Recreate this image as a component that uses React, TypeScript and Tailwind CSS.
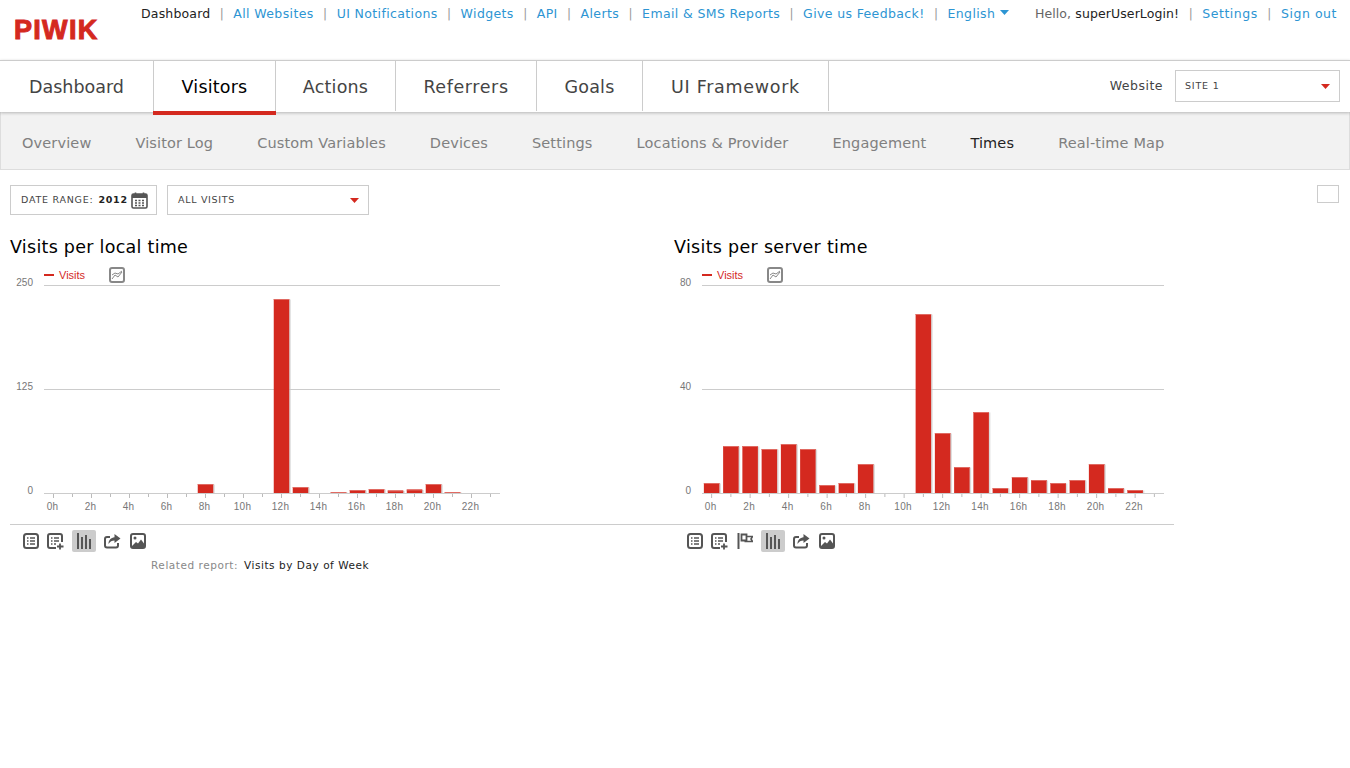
import React from 'react';

const FONT = 'font-["DejaVu_Sans",Verdana,sans-serif]';

const RED = '#d4291f';

const topLinks = ['All Websites', 'UI Notifications', 'Widgets', 'API', 'Alerts', 'Email & SMS Reports', 'Give us Feedback!'];
const mainTabs = [
  { label: 'Dashboard', w: 'w-[153px]', track: 'tracking-[0px]' },
  { label: 'Visitors', w: 'w-[123px]', track: 'tracking-[0.2px]', active: true },
  { label: 'Actions', w: 'w-[120px]', track: 'tracking-[0.2px]' },
  { label: 'Referrers', w: 'w-[141px]', track: 'tracking-[0.6px]' },
  { label: 'Goals', w: 'w-[106px]', track: 'tracking-[0.2px]' },
  { label: 'UI Framework', w: 'w-[186px]', track: 'tracking-[0.7px]' },
];
const subTabs = ['Overview', 'Visitor Log', 'Custom Variables', 'Devices', 'Settings', 'Locations & Provider', 'Engagement', 'Times', 'Real-time Map'];

const Sep = () => <span className="w-[23px] text-center text-[12px] tracking-normal text-[#999]">|</span>;

const IconList = () => (
  <svg width="16" height="16" viewBox="0 0 16 16" fill="none" stroke="#555">
    <rect x="1" y="1" width="14" height="14" rx="2.5" strokeWidth="2" />
    <path d="M4 5h1.5M7 5h5M4 8h1.5M7 8h5M4 11h1.5M7 11h5" strokeWidth="1.6" />
  </svg>
);

const IconListPlus = () => (
  <svg width="17" height="17" viewBox="0 0 17 17" fill="none" stroke="#555">
    <path d="M9 15H3a2 2 0 0 1-2-2V3a2 2 0 0 1 2-2h10a2 2 0 0 1 2 2v6" strokeWidth="2" />
    <path d="M4 5h1.5M7 5h5M4 8h1.5M7 8h5M4 11h1.5M7 11h2" strokeWidth="1.6" />
    <path d="M13 10.5v6M10 13.5h6.5" strokeWidth="1.8" />
  </svg>
);

const IconFlag = () => (
  <svg width="16" height="16" viewBox="0 0 16 16" fill="none" stroke="#555">
    <path d="M1.5 0v16" strokeWidth="2" />
    <path d="M4.5 1.5h5v6h-5z" strokeWidth="1.8" />
    <path d="M9.5 3.5h6l-1.5 2.5 1.5 2.5H7.5" strokeWidth="1.6" />
  </svg>
);

const IconBars = () => (
  <svg width="16" height="16" viewBox="0 0 16 16" fill="#555">
    <rect x="1" y="0" width="2" height="16" />
    <rect x="5" y="4" width="2" height="12" />
    <rect x="9" y="2" width="2" height="14" />
    <rect x="13" y="6" width="2" height="10" />
  </svg>
);

const IconShare = () => (
  <svg width="17" height="16" viewBox="0 0 17 16" fill="none">
    <path d="M6 4H3a2 2 0 0 0-2 2v6.5a2 2 0 0 0 2 2h9a2 2 0 0 0 2-2V10" stroke="#555" strokeWidth="2" />
    <path d="M10.5 1l6 4.5-6 4.5V7.5C8 7.5 6 8.5 4.5 11c0-4 2.5-6.5 6-6.8z" fill="#555" />
  </svg>
);

const IconImage = () => (
  <svg width="16" height="16" viewBox="0 0 16 16" fill="none">
    <rect x="1" y="1" width="14" height="14" rx="2" stroke="#555" strokeWidth="2" />
    <circle cx="5" cy="5" r="1.5" fill="#555" />
    <path d="M2 13l4-4 2 1.5 3-4 3 4V14H2z" fill="#555" />
  </svg>
);

const IconCalendar = () => (
  <svg width="17" height="17" viewBox="0 0 17 17" fill="none" className="ml-[3px]">
    <rect x="1" y="2" width="15" height="14" rx="1.5" stroke="#555" strokeWidth="1.6" />
    <rect x="1" y="2" width="15" height="4" fill="#555" />
    <path d="M4.5 0.5v3M12.5 0.5v3" stroke="#555" strokeWidth="1.6" />
    <path d="M4 8.5h2M7.5 8.5h2M11 8.5h2M4 11h2M7.5 11h2M11 11h2M4 13.5h2M7.5 13.5h2M11 13.5h2" stroke="#555" strokeWidth="1.4" />
  </svg>
);

const Caret = ({ color = RED }: { color?: string }) => (
  <svg width="9" height="5" viewBox="0 0 9 5" fill={color}>
    <path d="M0 0h9L4.5 5z" />
  </svg>
);

type ChartProps = {
  tops: Record<number, number>;
  yLabels: string[];
  x0: number;
  plotW: number;
};

// tops are page y values, the svg starts at y=262 of the page
const BarChart = ({ tops, yLabels, x0, plotW }: ChartProps) => {
  const step = plotW / 24;
  const axis = 231;
  const barW = 15.5;
  const ticks = Array.from({ length: 24 }, (_, i) => i);
  return (
    <svg width="500" height="262" viewBox="0 0 500 262" className="block">
      <rect x={x0} y="12" width="10" height="2" fill={RED} />
      <text x={x0 + 15} y="17" fontSize="11" fill={RED} fontFamily="'Liberation Sans', sans-serif">Visits</text>
      <g fill="none" stroke="#888" transform={`translate(${x0 + 65} 0)`}>
        <rect x="1" y="6" width="14" height="14" rx="2" strokeWidth="2" />
        <path d="M3 17l3-4 3 2 4-5M3 13l3-2 3 1 4-3" strokeWidth="1" />
      </g>
      <path d={`M${x0} 23.5H${x0 + plotW}M${x0} 127.5H${x0 + plotW}M${x0} 231.5H${x0 + plotW}`} stroke="#ccc" />
      {yLabels.map((l, i) => (
        <text key={l} x={x0 - 11} y={24 + i * 104} fontSize="10" fill="#777" textAnchor="end" fontFamily="'Liberation Sans', sans-serif">{l}</text>
      ))}
      {Object.entries(tops).map(([hour, top]) => {
        const x = x0 + Number(hour) * step + (step - barW) / 2;
        const y = top - 262;
        return (
          <g key={hour}>
            <rect x={x + 1.5} y={y + 0.5} width={barW} height={axis - y} fill="#ccc" opacity="0.7" />
            <rect x={x} y={y} width={barW} height={axis - y} fill={RED} />
            <rect x={x} y={y} width={barW} height="1" fill="#e06a62" />
          </g>
        );
      })}
      {ticks.map((i) => (
        <path key={i} d={`M${x0 + (i + 0.5) * step} 232v${i % 2 === 0 ? 4 : 3}`} stroke="#bbb" />
      ))}
      {ticks.filter((i) => i % 2 === 0).map((i) => (
        <text key={i} x={x0 + (i + 0.5) * step - 1} y="248" fontSize="10" fill="#777" textAnchor="middle" fontFamily="'Liberation Sans', sans-serif" letterSpacing="0.3">{i}h</text>
      ))}
    </svg>
  );
};

const IconBtn = ({ children, active }: { children: React.ReactNode; active?: boolean }) => (
  <span className={`flex h-[22px] items-center justify-center rounded-[2px] ${active ? 'w-[24px] bg-[#ccc]' : 'w-[17px]'}`}>{children}</span>
);

const localTops: Record<number, number> = { 8: 484, 12: 299, 13: 487, 15: 492, 16: 490, 17: 489, 18: 490.5, 19: 489.5, 20: 484, 21: 492 };
const serverTops: Record<number, number> = { 0: 483, 1: 446, 2: 446, 3: 449, 4: 444, 5: 449, 6: 485, 7: 483, 8: 464, 11: 314, 12: 433, 13: 467, 14: 412, 15: 488, 16: 477, 17: 480, 18: 483, 19: 480, 20: 464, 21: 488, 22: 490 };

export default function App() {
  return (
    <div className={`${FONT} relative min-h-[768px] bg-white text-[#444]`}>
      <header className="flex h-[60px]">
        <div className="w-[141px] pt-[14px] pl-[14px]">
          <span className="block font-['Liberation_Sans',sans-serif] text-[27px] leading-[32px] font-bold tracking-[1.3px] text-[#d4291f] [-webkit-text-stroke:1px_#d4291f]">PIWIK</span>
        </div>
        <nav className="flex items-start pt-[6px] text-[12.5px] leading-[16px] tracking-[0.37px] text-[#2d95d3]">
          <span className="tracking-[0.17px] text-[#222]">Dashboard</span>
          {topLinks.map((l) => (
            <React.Fragment key={l}>
              <Sep />
              <span>{l}</span>
            </React.Fragment>
          ))}
          <Sep />
          <span className="flex items-start gap-[5px]">English<span className="pt-[4px]"><Caret color="#2d95d3" /></span></span>
        </nav>
        <div className="ml-auto flex items-start pt-[6px] pr-[13px] text-[12.5px] leading-[16px] tracking-[0.55px] text-[#2d95d3]">
          <span className="tracking-[0.1px] text-[#666]">Hello, <span className="text-[#222]">superUserLogin!</span></span>
          <Sep />
          <span>Settings</span>
          <Sep />
          <span>Sign out</span>
        </div>
      </header>

      <div className="relative z-10 flex h-[52px] border-t border-[#ccc] shadow-[0_1px_3px_rgba(0,0,0,0.25)]">
        {mainTabs.map((t) => (
          <div
            key={t.label}
            className={`${t.w} ${t.track} relative flex h-[50px] shrink-0 items-center justify-center border-r border-[#ccc] pt-[3px] text-[17.5px] ${t.active ? 'border-l text-black' : 'text-[#444]'} ${t.label === 'Dashboard' ? 'border-r-0' : ''}`}
          >
            {t.label}
            {t.active && <span className="absolute -bottom-[4px] -left-px h-[4px] w-[123px] bg-[#d4291f]" />}
          </div>
        ))}
        <div className="ml-auto flex items-center pr-[10px] pb-px">
          <span className="mr-[12px] text-[12.5px] tracking-[0.5px] text-[#444]">Website</span>
          <div className="flex h-[32px] w-[165px] items-center justify-between border border-[#ccc] pr-[9px] pl-[9px] text-[9.5px] tracking-[0.8px]">
            SITE 1
            <Caret />
          </div>
        </div>
      </div>

      <div className="flex h-[58px] items-center gap-[44px] border border-t-0 border-[#ddd] bg-[#f2f2f2] pt-[6px] pl-[21px] text-[14.5px] tracking-[0.14px] text-[#808080]">
        {subTabs.map((s) => (
          <span key={s} className={s === 'Times' ? 'text-[#222]' : ''}>{s}</span>
        ))}
      </div>

      <div className="flex items-start px-[10px] pt-[15px]">
        <div className="flex h-[30px] w-[147px] items-center border border-[#ccc] pl-[10px] text-[9.5px] tracking-[0.75px]">
          DATE RANGE:<b className="ml-[5px] text-[#222]">2012</b><IconCalendar />
        </div>
        <div className="ml-[10px] flex h-[30px] w-[202px] items-center justify-between border border-[#ccc] pr-[9px] pl-[10px] text-[9.5px] tracking-[0.7px]">
          ALL VISITS
          <Caret />
        </div>
        <div className="mr-[1px] ml-auto h-[18px] w-[22px] border border-[#ccc]" />
      </div>

      <div className="grid grid-cols-[664px_500px] px-[10px]">
        <section>
          <h2 className="mt-[19px] h-[26px] text-[17.5px] leading-[26px] tracking-[0.27px] text-black">Visits per local time</h2>
          <div className="mt-[2px]">
            <BarChart tops={localTops} yLabels={['250', '125', '0']} x0={34} plotW={456} />
          </div>
          <div className="flex h-[33px] items-center gap-[8px] border-t border-[#ccc] pl-[12px]">
            <IconBtn><IconList /></IconBtn>
            <IconBtn><IconListPlus /></IconBtn>
            <IconBtn active><IconBars /></IconBtn>
            <IconBtn><IconShare /></IconBtn>
            <IconBtn><IconImage /></IconBtn>
          </div>
          <p className="mt-[1px] pl-[141px] text-[10.5px] leading-[14px] tracking-[0.55px] text-[#888]">
            Related report: <span className="ml-[2px] text-[#222]">Visits by Day of Week</span>
          </p>
        </section>
        <section>
          <h2 className="mt-[19px] h-[26px] text-[17.5px] leading-[26px] tracking-[0.3px] text-black">Visits per server time</h2>
          <div className="mt-[2px]">
            <BarChart tops={serverTops} yLabels={['80', '40', '0']} x0={28} plotW={462} />
          </div>
          <div className="flex h-[33px] items-center gap-[8px] border-t border-[#ccc] pl-[12px]">
            <IconBtn><IconList /></IconBtn>
            <IconBtn><IconListPlus /></IconBtn>
            <IconBtn><IconFlag /></IconBtn>
            <IconBtn active><IconBars /></IconBtn>
            <IconBtn><IconShare /></IconBtn>
            <IconBtn><IconImage /></IconBtn>
          </div>
        </section>
      </div>
    </div>
  );
}
